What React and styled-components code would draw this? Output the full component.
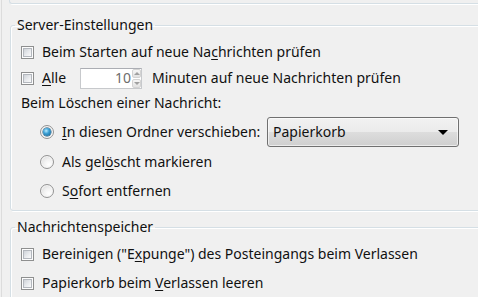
import styled, { createGlobalStyle } from 'styled-components';

const GlobalStyle = createGlobalStyle`
    html, body {
        margin: 0;
        padding: 0;
        background: #f0f0f0;
        overflow: hidden;
    }
    body {
        font-family: "Noto Sans", "Open Sans", sans-serif;
        font-size: 14px;
        color: #111;
    }
`

function CheckRow({ top, children }) {
    return (
        <Row top={top}>
            <CheckBox />
            <span>{children}</span>
        </Row>
    );
}

function RadioRow({ top, checked, children, labelWidth }) {
    return (
        <Row top={top} indent={19}>
            <Radio checked={checked} />
            <Label width={labelWidth}>{children}</Label>
        </Row>
    );
}

function App() {
    return (
        <>
            <GlobalStyle />
            <Page>
                <PrevGroup />

                <Group>
                    <legend>Server-Einstellungen</legend>
                    <CheckRow top={9}>Beim Starten auf neue Na<u>c</u>hrichten prüfen</CheckRow>
                    <Row top={6} height={22}>
                        <CheckBox />
                        <Label width={38}><u>A</u>lle</Label>
                        <Spinner>
                            <span className='value'>10</span>
                            <div className='buttons'>
                                <div className='up'><i /></div>
                                <div className='down'><i /></div>
                            </div>
                        </Spinner>
                        <span className='after'>Minuten auf neue Nachrichten prüfen</span>
                    </Row>
                    <Row top={5} indent={-2}>
                        <span>Beim Löschen einer Nachricht:</span>
                    </Row>
                    <Row top={5} height={30} indent={19}>
                        <Radio checked />
                        <Label width={205}><u>I</u>n diesen Ordner verschieben:</Label>
                        <Select>
                            <span>Papierkorb</span>
                            <i />
                        </Select>
                    </Row>
                    <RadioRow top={6}>Als gel<u>ö</u>scht markieren</RadioRow>
                    <RadioRow top={11}>S<u>o</u>fort entfernen</RadioRow>
                </Group>

                <Group second>
                    <legend>Nachrichtenspeicher</legend>
                    <CheckRow top={9}>Bereinigen ("E<u>x</u>punge") des Posteingangs beim Verlassen</CheckRow>
                    <CheckRow top={11}>Papierkorb beim <u>V</u>erlassen leeren</CheckRow>
                </Group>
            </Page>
        </>
    );
}

export default App;

const Page = styled.div`
    width: 478px;
    height: 297px;
    overflow: hidden;
    display: flex;
    flex-direction: column;
    background: linear-gradient(to right, transparent 1px, #dcdcdc 1px, #dcdcdc 2px, transparent 2px);
`

const PrevGroup = styled.div`
    flex: none;
    height: 3px;
    margin-left: 9px;
    margin-right: -20px;
    border-left: 1px solid #d5dfe5;
    border-bottom: 1px solid #d5dfe5;
    border-bottom-left-radius: 3px;
    box-shadow: 1px 1px 0 #fff;
`

const Group = styled.fieldset`
    flex: none;
    margin: ${p => p.second ? '7px' : '12px'} -30px 0 10px;
    padding: 0 0 ${p => p.second ? '20px' : '10px'} 10px;
    border: 1px solid #d5dfe5;
    border-radius: 3px;
    box-shadow: inset 1px 1px 0 #fff, 1px 1px 0 #fff;
    min-width: 0;
    display: flex;
    flex-direction: column;

    legend {
        margin-left: -6px;
        padding: 0 2px;
        line-height: 18px;
        height: 18px;
    }
`

const Row = styled.div`
    flex: none;
    display: flex;
    align-items: center;
    height: ${p => p.height || 18}px;
    margin-top: ${p => p.top || 0}px;
    padding-left: ${p => p.indent || 0}px;
    white-space: nowrap;
    line-height: 18px;

    .after {
        margin-left: 10px;
    }
    u {
        text-decoration-thickness: 1px;
        text-underline-offset: 2px;
    }
`

const Label = styled.span`
    display: inline-block;
    width: ${p => p.width}px;
`

const CheckBox = styled.span`
    position: relative;
    flex: none;
    width: 11px;
    height: 11px;
    margin-right: 8px;
    border: 1px solid #8e8f8f;
    background: #fdfdfd;

    &::after {
        content: '';
        position: absolute;
        left: 1px;
        top: 1px;
        width: 7px;
        height: 7px;
        border: 1px solid #b3b7bd;
        background: linear-gradient(135deg, #cfd3d8 0%, #e9ebee 55%, #fafafa 100%);
    }
`

const Radio = styled.span`
    position: relative;
    flex: none;
    width: 12px;
    height: 12px;
    margin-right: 8px;
    border-radius: 50%;
    border: 1px solid #939393;
    background: radial-gradient(circle at 65% 70%, #ffffff 0%, #f2f2f2 40%, #d4d4d4 100%);
    box-shadow: inset 0 0 0 1px #f7f7f7;

    &::after {
        content: '';
        display: ${p => p.checked ? 'block' : 'none'};
        position: absolute;
        left: 2px;
        top: 2px;
        width: 8px;
        height: 8px;
        border-radius: 50%;
        background: radial-gradient(circle at 40% 35%, #b9ecff 0%, #3b9fd4 40%, #135a86 100%);
        box-shadow: 0 0 0 0.5px #1f4e6e;
    }
`

const Spinner = styled.div`
    flex: none;
    width: 60px;
    height: 19px;
    border: 1px solid #c7c9cc;
    border-top-color: #abadb3;
    background: #fff;
    display: flex;
    align-items: center;

    .value {
        flex: 1;
        text-align: right;
        color: #6d6d6d;
        padding-right: 1px;
    }
    .buttons {
        width: 9px;
        height: 19px;
        display: flex;
        flex-direction: column;
        gap: 1px;
    }
    .up, .down {
        flex: 1;
        border: 1px solid #d3d3d3;
        border-radius: 2px;
        background: linear-gradient(#f6f6f6, #e2e2e2);
        display: flex;
        align-items: center;
        justify-content: center;
    }
    .up i, .down i {
        width: 0;
        height: 0;
        border-left: 3px solid transparent;
        border-right: 3px solid transparent;
    }
    .up i {
        border-bottom: 3px solid #a0a0a0;
    }
    .down i {
        border-top: 3px solid #a0a0a0;
    }
`

const Select = styled.div`
    flex: none;
    width: 192px;
    height: 30px;
    box-sizing: border-box;
    padding: 0 10px 0 5px;
    border: 1px solid #707070;
    border-radius: 3px;
    background: linear-gradient(#f2f2f2 0%, #ebebeb 50%, #dddddd 50%, #cfcfcf 100%);
    box-shadow: inset 0 0 0 1px rgba(255,255,255,0.6);
    display: flex;
    align-items: center;
    justify-content: space-between;

    i {
        width: 0;
        height: 0;
        border-left: 5px solid transparent;
        border-right: 5px solid transparent;
        border-top: 5px solid #000;
    }
`
